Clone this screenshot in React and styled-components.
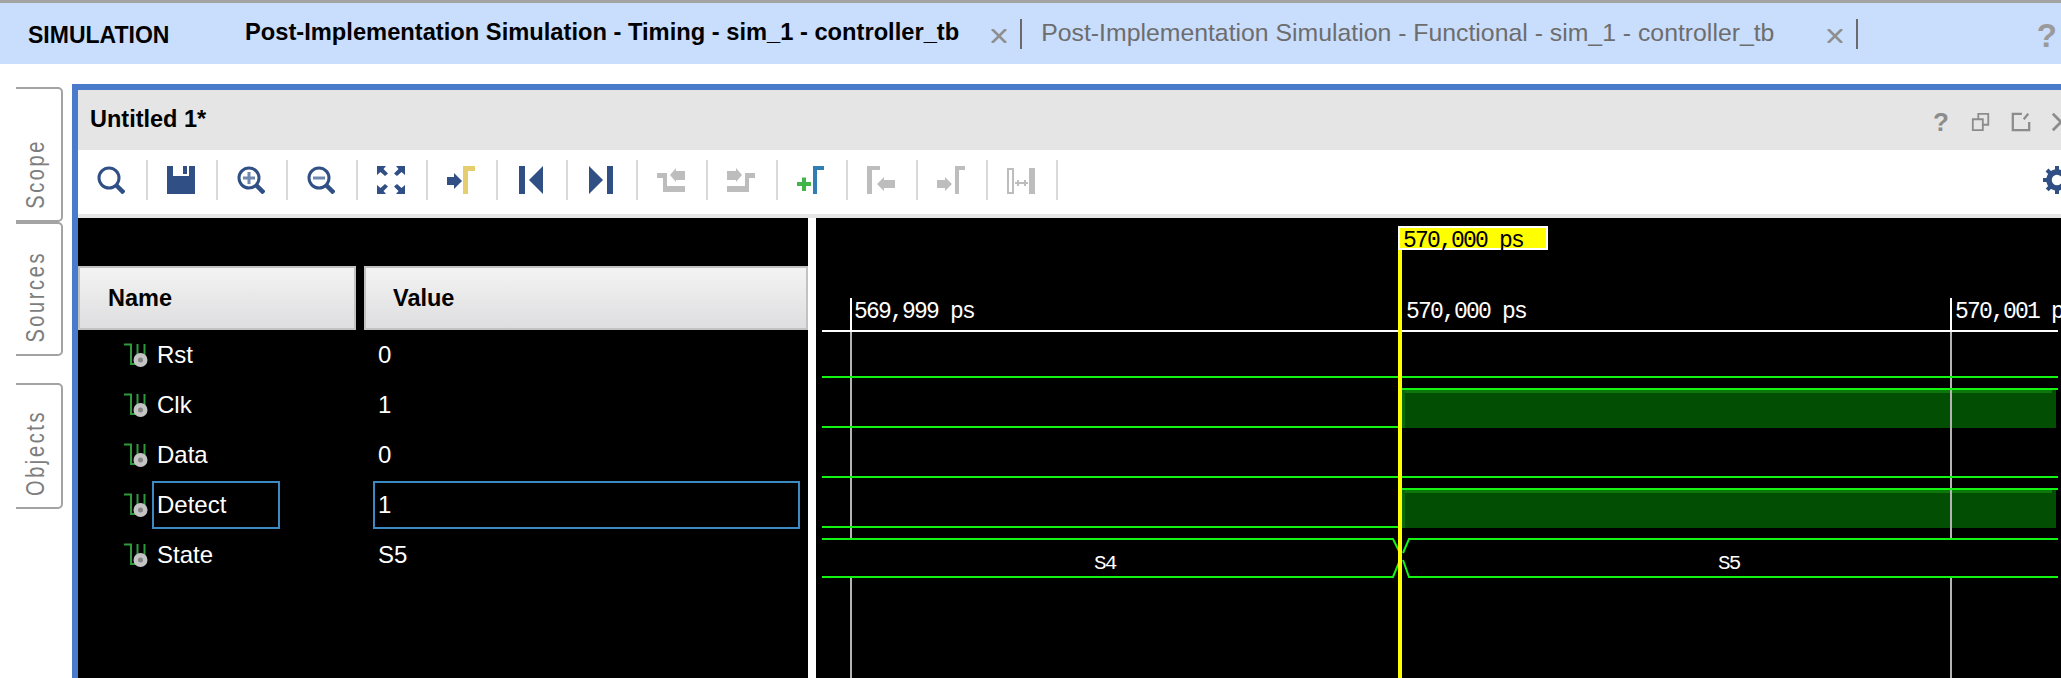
import React from 'react'
import styled, { createGlobalStyle } from 'styled-components'

const NAVY = '#2f4f85'
const OFF = '#bdbdbd'
const GREEN = '#14f514'

const GlobalStyle = createGlobalStyle`
  html, body { margin: 0; padding: 0; background: #fff; }
  * { box-sizing: border-box; }
`

const Page = styled.div`
  width: 2061px;
  height: 678px;
  overflow: hidden;
  display: flex;
  flex-direction: column;
  background: #fff;
  font-family: "Liberation Sans", Arial, sans-serif;
  color: #000;
`
const TabStrip = styled.div`
  height: 64px;
  flex: none;
  display: flex;
  align-items: center;
  padding: 3px 0 0 28px;
  border-top: 3px solid #a3a3a3;
  background: #c9ddfd;
`
const Section = styled.div`
  width: 217px;
  flex: none;
  font-size: 23px;
  font-weight: bold;
`
const Tab = styled.div`
  display: flex;
  align-items: center;
  margin-right: 19px;
`
const TabName = styled.span`
  font-size: ${p => (p.$active ? '23.7px' : '24.8px')};
  font-weight: ${p => (p.$active ? 'bold' : 'normal')};
  color: ${p => (p.$active ? '#000' : '#6d6d6d')};
  margin-top: -5px;
`
const TabClose = styled.svg`
  width: 16px;
  height: 14px;
  margin: 2px 0 0 ${p => p.$gap}px;
`
const TabRule = styled.div`
  width: 2px;
  height: 30px;
  margin: -2px 0 0 13px;
  background: #6a6a6a;
`
const HelpBig = styled.span`
  margin-left: auto;
  margin-right: 4px;
  font-size: 33px;
  line-height: 1;
  font-weight: bold;
  color: #9a9a9a;
`
const Body = styled.div`
  flex: 1;
  min-height: 0;
  display: flex;
  margin-top: 20px;
`
const Rail = styled.div`
  width: 72px;
  flex: none;
  padding: 3px 0 0 16px;
`
const RailTab = styled.div`
  width: 47px;
  height: ${p => p.$h}px;
  margin-top: ${p => p.$gap || 0}px;
  display: flex;
  flex-direction: column;
  align-items: flex-start;
  justify-content: flex-end;
  padding: 0 0 11px 11px;
  border: 2px solid #a3a3a3;
  border-left: none;
  border-radius: 0 5px 5px 0;
`
const RailLabel = styled.span`
  writing-mode: vertical-rl;
  transform: rotate(180deg) scaleX(1.3);
  font-size: 20px;
  line-height: 16px;
  letter-spacing: 2.6px;
  color: #7d7d7d;
`
const Panel = styled.div`
  flex: 1;
  min-width: 0;
  display: flex;
  flex-direction: column;
  border-top: 6px solid #4a7bca;
  border-left: 6px solid #4a7bca;
`
const TitleBar = styled.div`
  height: 60px;
  flex: none;
  display: flex;
  align-items: center;
  padding-left: 12px;
  background: #e5e5e5;
`
const Title = styled.div`
  font-size: 23.5px;
  font-weight: bold;
  margin-top: -2px;
`
const WindowTools = styled.div`
  margin-left: auto;
  margin-right: -10px;
  margin-top: 4px;
  display: flex;
  align-items: center;
  gap: 20px;
`
const WindowHelp = styled.span`
  width: 18px;
  font-size: 26px;
  line-height: 1;
  font-weight: bold;
  color: #8c8c8c;
`
const WindowIcon = styled.svg`
  width: 20px;
  height: 20px;
  flex: none;
`
const Toolbar = styled.div`
  height: 68px;
  flex: none;
  display: flex;
  align-items: center;
  padding-bottom: 4px;
  border-bottom: 4px solid #e6e6e6;
  overflow: hidden;
`
const ToolCell = styled.div`
  width: 70px;
  height: 40px;
  flex: none;
  display: flex;
  align-items: center;
  justify-content: center;
  padding-right: 2px;
  border-right: 2px solid #d9d9d9;
`
const ToolIcon = styled.svg`
  width: 28px;
  height: 28px;
  display: block;
`
const Gear = styled(ToolIcon)`
  flex: none;
  margin-left: auto;
  margin-right: -10px;
`
const Content = styled.div`
  flex: 1;
  min-height: 0;
  display: flex;
`
const Objects = styled.div`
  width: 730px;
  flex: none;
  padding-top: 48px;
  background: #000;
  display: grid;
  grid-template-columns: 278px 444px;
  grid-template-rows: 64px 1fr;
  column-gap: 8px;
`
const HeadCell = styled.div`
  display: flex;
  align-items: center;
  padding-left: ${p => p.$pad}px;
  padding-top: 1px;
  font-size: 23.5px;
  font-weight: bold;
  border: 2px solid #c2c2c2;
  background: linear-gradient(#f3f3f3, #dedee0);
`
const Column = styled.div`
  display: flex;
  flex-direction: column;
  background: #000;
`
const Row = styled.div`
  height: 50px;
  flex: none;
  display: flex;
  align-items: center;
  padding-left: ${p => p.$pad}px;
`
const SignalIcon = styled.svg`
  width: 24px;
  height: 24px;
  flex: none;
  margin: 0 4px 0 0;
`
const Cell = styled.div`
  width: ${p => p.$w}px;
  height: 48px;
  display: flex;
  align-items: center;
  padding: 0 0 0 3px;
  font-size: 24px;
  color: #fff;
  border: 2px solid ${p => (p.$selected ? '#3c8ac4' : 'transparent')};
`
const Wave = styled.svg`
  flex: 1;
  min-width: 0;
  height: 460px;
  margin-left: 8px;
  display: block;
  background: #000;
`
const MonoText = styled.text`
  font-family: "Liberation Mono", monospace;
  font-size: ${p => p.$size || 23}px;
  letter-spacing: -1.8px;
  fill: ${p => p.$fill || '#fff'};
`

const lens = (
  <>
    <circle cx="12" cy="12" r="10" fill="none" stroke={NAVY} strokeWidth="3" />
    <path d="M19 19l8 8" stroke={NAVY} strokeWidth="4.5" />
  </>
)
const gamma = (x, color) => <path d={`M${x} 28V0H${x + 11}V4H${x + 4}V28Z`} fill={color} />

const TOOLS = [
  lens,
  <>
    <path d="M0 0H6V10H22V0H28V28H0Z" fill={NAVY} />
    <path d="M16 0H20V8H16Z" fill={NAVY} />
  </>,
  <>
    {lens}
    <path d="M6 12H18M12 6V18" stroke="#6f88b0" strokeWidth="3" />
  </>,
  <>
    {lens}
    <path d="M6 12H18" stroke="#6f88b0" strokeWidth="3" />
  </>,
  <path
    d="M0 0H9L6.5 3 11 7.5 8 10 3.5 6 0 9ZM28 0H19L21.5 3 17 7.5 20 10 24.5 6 28 9ZM0 28H9L6.5 25 11 20.5 8 18 3.5 22 0 19ZM28 28H19L21.5 25 17 20.5 20 18 24.5 22 28 19Z"
    fill={NAVY}
  />,
  <>
    <path d="M0 11H7V7L15 15 7 23V19H0Z" fill={NAVY} />
    <path d="M16 28V0H28V5H21V28Z" fill="#e6cd6e" />
  </>,
  <>
    <path d="M2 0H8V28H2Z" fill={NAVY} />
    <path d="M26 0V28L12 14Z" fill={NAVY} />
  </>,
  <>
    <path d="M2 0L16 14 2 28Z" fill={NAVY} />
    <path d="M20 0H26V28H20Z" fill={NAVY} />
  </>,
  <>
    <path d="M13 9L19 2V5H28V14H19V16Z" fill={OFF} />
    <path d="M0 7H10V20H28V26H6V12H0Z" fill={OFF} />
  </>,
  <>
    <path d="M15 9L9 2V5H0V14H9V16Z" fill={OFF} />
    <path d="M28 7H18V20H0V26H22V12H28Z" fill={OFF} />
  </>,
  <>
    <path d="M5 11.5H9V16H14V20H9V25H5V20H0V16H5Z" fill="#3fb54a" />
    {gamma(16, '#2f7fb5')}
  </>,
  <>
    <path d="M0 28V0H13V4H5V28Z" fill={OFF} />
    <path d="M10 18L17 11V14H28V22H17V25Z" fill={OFF} />
  </>,
  <>
    <path d="M0 14H8V11L15 18 8 25V22H0Z" fill={OFF} />
    <path d="M18 28V0H28V4H22V28Z" fill={OFF} />
  </>,
  <>
    <path d="M1 3H6V27H1Z" fill="none" stroke={OFF} strokeWidth="2" />
    <path d="M22 2H28V28H22Z" fill={OFF} />
    <path d="M8 17H21M11 14V20M18 14V20" stroke={OFF} strokeWidth="2" />
  </>,
]

const SIGNALS = [
  { name: 'Rst', value: '0' },
  { name: 'Clk', value: '1' },
  { name: 'Data', value: '0' },
  { name: 'Detect', value: '1', selected: true },
  { name: 'State', value: 'S5' },
]

const Close = ({ gap }) => (
  <TabClose $gap={gap} viewBox="0 0 16 14">
    <path d="M1 0L15 14M15 0L1 14" stroke="#8f8f8f" strokeWidth="2.6" />
  </TabClose>
)

const Signal = () => (
  <SignalIcon viewBox="0 0 24 24">
    <path d="M0 1.5H7V21H12" fill="none" stroke="#2f9a3c" strokeWidth="2" />
    <path d="M13.5 1V12M20.5 1V12" fill="none" stroke="#2f9a3c" strokeWidth="2" />
    <circle cx="16.5" cy="17" r="7" fill="#c4c4c4" />
    <circle cx="16.5" cy="17" r="2.5" fill="#858585" />
  </SignalIcon>
)

// coordinates in here are the ones of the page, see viewBox
const Waveform = () => (
  <Wave viewBox="816 218 1245 460">
    <rect x="1402" y="390" width="654" height="38" fill="#024e02" />
    <rect x="1402" y="390" width="650" height="3" fill="#0a780a" />
    <rect x="1402" y="390" width="3" height="38" fill="#0a6a0a" />
    <rect x="1402" y="490" width="654" height="38" fill="#024e02" />
    <rect x="1402" y="490" width="650" height="3" fill="#0a780a" />
    <rect x="1402" y="490" width="3" height="38" fill="#0a6a0a" />

    <path d="M851 332V678M1951 332V678" stroke="#b4b4b4" strokeWidth="2" />
    <path d="M851 298V332M1951 298V332" stroke="#fff" strokeWidth="2" />
    <rect x="822" y="330" width="1236" height="2" fill="#fff" />
    <rect x="822" y="540" width="1236" height="37" fill="#000" />

    <g fill="none" stroke={GREEN} strokeWidth="2">
      <path d="M822 377H2058" />
      <path d="M822 427H1400M1402 389H2058" />
      <path d="M822 477H2058" />
      <path d="M822 527H1400M1402 489H2058" />
      <path d="M822 539H1393L1400 553M1403 553L1409 539H2058" />
      <path d="M822 577H1393L1400 560M1403 560L1409 577H2058" />
    </g>

    <rect x="1398" y="250" width="4" height="428" fill="#ffff00" />
    <rect x="1398" y="226" width="150" height="24" fill="#fff" />
    <rect x="1400" y="228" width="146" height="20" fill="#ffff00" />

    <MonoText x="1403" y="247" $fill="#000">570,000 ps</MonoText>
    <MonoText x="854" y="318">569,999 ps</MonoText>
    <MonoText x="1406" y="318">570,000 ps</MonoText>
    <MonoText x="1955" y="318">570,001 ps</MonoText>
    <MonoText x="1094" y="569" $size={21}>S4</MonoText>
    <MonoText x="1718" y="569" $size={21}>S5</MonoText>
  </Wave>
)

export default function App() {
  return (
    <Page>
      <GlobalStyle />
      <TabStrip>
        <Section>SIMULATION</Section>
        <Tab>
          <TabName $active>Post-Implementation Simulation - Timing - sim_1 - controller_tb</TabName>
          <Close gap={32} />
          <TabRule />
        </Tab>
        <Tab>
          <TabName>Post-Implementation Simulation - Functional - sim_1 - controller_tb</TabName>
          <Close gap={53} />
          <TabRule />
        </Tab>
        <HelpBig>?</HelpBig>
      </TabStrip>
      <Body>
        <Rail>
          <RailTab $h={135}><RailLabel>Scope</RailLabel></RailTab>
          <RailTab $h={134}><RailLabel>Sources</RailLabel></RailTab>
          <RailTab $h={126} $gap={27}><RailLabel>Objects</RailLabel></RailTab>
        </Rail>
        <Panel>
          <TitleBar>
            <Title>Untitled 1*</Title>
            <WindowTools>
              <WindowHelp>?</WindowHelp>
              <WindowIcon viewBox="0 0 22 22">
                <path d="M8 7V2H19V14H13M2 8H13V20H2Z" fill="none" stroke="#8c8c8c" strokeWidth="2" />
              </WindowIcon>
              <WindowIcon viewBox="0 0 22 22">
                <path d="M12 2H2V20H20V11M14 8L19 2" fill="none" stroke="#8c8c8c" strokeWidth="2.5" />
              </WindowIcon>
              <WindowIcon viewBox="0 0 22 22">
                <path d="M2 2L20 20M20 2L2 20" stroke="#8c8c8c" strokeWidth="3" />
              </WindowIcon>
            </WindowTools>
          </TitleBar>
          <Toolbar>
            {TOOLS.map((icon, i) => (
              <ToolCell key={i}>
                <ToolIcon viewBox="0 0 28 28">{icon}</ToolIcon>
              </ToolCell>
            ))}
            <Gear viewBox="0 0 28 28">
              <circle cx="14" cy="14" r="8" fill="none" stroke={NAVY} strokeWidth="5.5" />
              <path d="M14 0V28M0 14H28M4 4L24 24M24 4L4 24" stroke={NAVY} strokeWidth="4" strokeDasharray="5 18" />
            </Gear>
          </Toolbar>
          <Content>
            <Objects>
              <HeadCell $pad={28}>Name</HeadCell>
              <HeadCell $pad={27}>Value</HeadCell>
              <Column>
                {SIGNALS.map(s => (
                  <Row key={s.name} $pad={46}>
                    <Signal />
                    <Cell $w={128} $selected={s.selected}>{s.name}</Cell>
                  </Row>
                ))}
              </Column>
              <Column>
                {SIGNALS.map(s => (
                  <Row key={s.name} $pad={9}>
                    <Cell $w={427} $selected={s.selected}>{s.value}</Cell>
                  </Row>
                ))}
              </Column>
            </Objects>
            <Waveform />
          </Content>
        </Panel>
      </Body>
    </Page>
  )
}
